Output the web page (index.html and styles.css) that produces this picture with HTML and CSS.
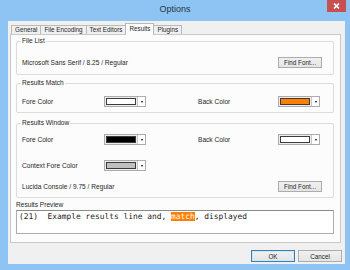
FILE: index.html
```html
<!DOCTYPE html>
<html lang="en">

<head>
  <meta charset="UTF-8" />
  <title>Options</title>
  <link rel="stylesheet" href="styles.css">
</head>

<body>
  <div class="window">
    <div class="titlebar">
      <div class="title">Options</div>
      <div class="close">
        <svg width="7" height="6" viewBox="0 0 7 6">
          <path d="M1 0.5 L6 5.5 M6 0.5 L1 5.5" stroke="#fff" stroke-width="1.6" />
        </svg>
      </div>
    </div>

    <div class="client">
      <div class="tabs">
        <div class="tab">General</div>
        <div class="tab">File Encoding</div>
        <div class="tab">Text Editors</div>
        <div class="tab active">Results</div>
        <div class="tab">Plugins</div>
      </div>

      <div class="panel">
        <fieldset class="group group-files">
          <legend>File List</legend>
          <div class="font-row">
            <span>Microsoft Sans Serif / 8.25 / Regular</span>
            <button class="btn">Find Font...</button>
          </div>
        </fieldset>

        <fieldset class="group group-match">
          <legend>Results Match</legend>
          <div class="row">
            <span>Fore Color</span>
            <div class="color-pick"><span class="swatch swatch-white"></span><span class="drop"></span></div>
            <span></span>
            <span>Back Color</span>
            <div class="color-pick"><span class="swatch swatch-orange"></span><span class="drop"></span></div>
          </div>
        </fieldset>

        <fieldset class="group group-window">
          <legend>Results Window</legend>
          <div class="row">
            <span>Fore Color</span>
            <div class="color-pick"><span class="swatch swatch-black"></span><span class="drop"></span></div>
            <span></span>
            <span>Back Color</span>
            <div class="color-pick"><span class="swatch swatch-white"></span><span class="drop"></span></div>
          </div>
          <div class="row row-context">
            <span>Context Fore Color</span>
            <div class="color-pick"><span class="swatch swatch-gray"></span><span class="drop"></span></div>
          </div>
          <div class="font-row font-row-window">
            <span>Lucida Console / 9.75 / Regular</span>
            <button class="btn">Find Font...</button>
          </div>
        </fieldset>

        <div class="preview-label">Results Preview</div>
        <div class="preview">(21)  Example results line and, <span class="hit">match</span>, displayed</div>
      </div>

      <div class="dialog-buttons">
        <button class="btn btn-dialog btn-default">OK</button>
        <button class="btn btn-dialog">Cancel</button>
      </div>
    </div>
  </div>
</body>

</html>
```

FILE: styles.css
```css
body {
  margin: 0;
  font-family: "Liberation Sans", Arial, sans-serif;
  font-size: 6.6px;
  color: #1f1f1f;
}

.window {
  width: 350px;
  height: 270px;
  background: #8dc4f3;
  display: flex;
  flex-direction: column;
}

.titlebar {
  height: 21px;
  display: grid;
  grid-template-columns: 1fr auto 1fr;
}

.title {
  grid-column: 2;
  font-size: 9px;
  line-height: 18px;
  color: #2a3642;
}

.close {
  grid-column: 3;
  justify-self: end;
  width: 19px;
  height: 12px;
  margin-right: 4px;
  background: #c75050;
  display: flex;
  align-items: center;
  justify-content: center;
}

.client {
  margin: 0 5px 0 8px;
  height: 243px;
  background: #f0f0f0;
  display: flex;
  flex-direction: column;
}

/* tab strip */
.tabs {
  display: flex;
  align-items: flex-end;
  height: 11px;
  margin-top: 2px;
  padding-left: 3px;
}

.tab {
  height: 8px;
  line-height: 8px;
  padding: 0 3px;
  border: 1px solid #b9b9b9;
  border-bottom: none;
  margin-right: -1px;
  background: #f0f0f0;
  font-size: 6.3px;
}

.tab.active {
  position: relative;
  height: 11px;
  line-height: 9px;
  margin-bottom: -1px;
  background: #fcfcfc;
}

.panel {
  box-sizing: border-box;
  width: 331px;
  height: 209px;
  margin-left: 2px;
  padding: 2px 6px 0 5px;
  background: #fcfcfc;
  border: 1px solid #c9c9c9;
}

/* group boxes */
.group {
  margin: 0;
  padding: 0 11px 0 5px;
  min-width: 0;
  border: 1px solid #dcdcdc;
  border-radius: 2px;
}

.group legend {
  padding: 0 1px;
  margin-left: -1px;
  line-height: 8px;
}

.group-files {
  padding-top: 12px;
  padding-bottom: 6px;
}

.group-match {
  margin-top: 4px;
  padding-top: 9px;
  padding-bottom: 5px;
}

.group-window {
  margin-top: 6px;
  padding-top: 7px;
  padding-bottom: 5px;
}

.row {
  display: grid;
  grid-template-columns: 82px 42px 1fr 80px 44px;
  align-items: center;
  height: 11px;
}

.row-context {
  margin-top: 15px;
}

.font-row {
  display: flex;
  justify-content: space-between;
  align-items: center;
  height: 11px;
}

.font-row-window {
  margin-top: 10px;
}

/* colour dropdowns */
.color-pick {
  box-sizing: border-box;
  width: 42px;
  height: 11px;
  display: flex;
  border: 1px solid #acacac;
  background: #ececec;
}

.swatch {
  flex: 1;
  margin: 1px;
  border: 1px solid #3c3c3c;
}

.swatch-white {
  background: #fff;
}

.swatch-orange {
  background: #ff8000;
}

.swatch-black {
  background: #000;
}

.swatch-gray {
  background: #c0c0c0;
}

.drop {
  width: 7px;
  border-left: 1px solid #c8c8c8;
  background: #fff;
  display: flex;
  align-items: center;
  justify-content: center;
}

.drop::after {
  content: "";
  border-left: 1.5px solid transparent;
  border-right: 1.5px solid transparent;
  border-top: 2px solid #000;
}

/* buttons */
.btn {
  box-sizing: border-box;
  width: 44px;
  height: 11px;
  padding: 0;
  font-family: inherit;
  font-size: 6.3px;
  color: #1f1f1f;
  background: linear-gradient(#f0f0f0, #e5e5e5);
  border: 1px solid #acacac;
  border-radius: 0;
}

.preview-label {
  margin-top: 3px;
  line-height: 8px;
}

.preview {
  box-sizing: border-box;
  height: 24px;
  margin-top: 1px;
  margin-right: 0;
  padding: 1px 2px;
  background: #fff;
  border: 1px solid #abadb3;
  border-top-color: #8a8a8a;
  font-family: "DejaVu Sans Mono", monospace;
  font-size: 7.9px;
  line-height: 10px;
  white-space: pre;
  color: #222;
}

.hit {
  background: #ff8000;
  color: #fff;
}

.dialog-buttons {
  display: flex;
  justify-content: flex-end;
  gap: 3px;
  margin-top: 7px;
  margin-right: 3px;
}

.btn-dialog {
  height: 12px;
  width: 44px;
}

.btn-default {
  border-color: #3c7fb1;
  box-shadow: inset 0 0 0 1px #cde6f7;
}
```
